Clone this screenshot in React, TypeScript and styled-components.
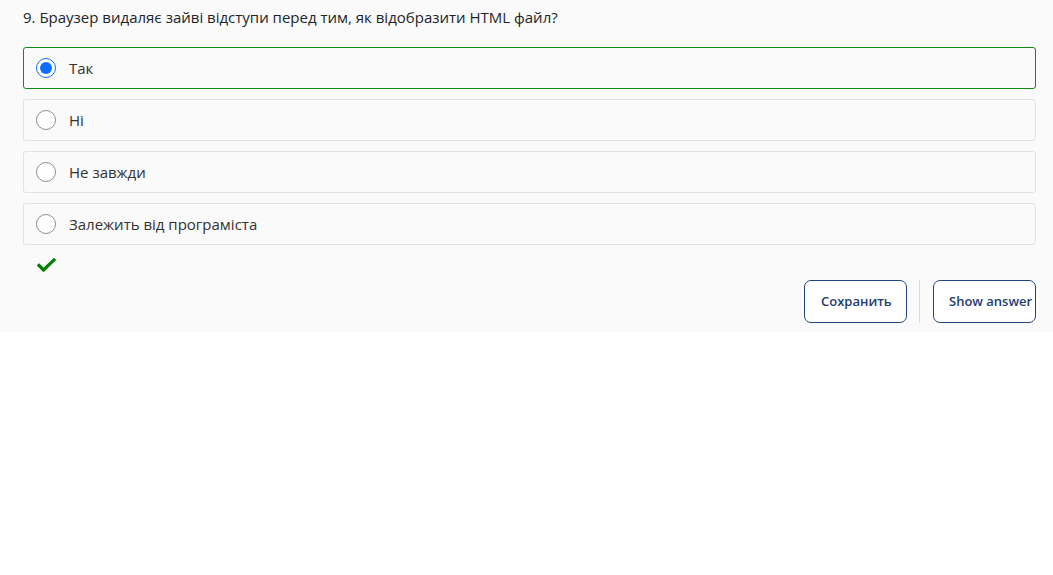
import React, { useState } from "react";
import styled, { createGlobalStyle } from "styled-components";

const Global = createGlobalStyle`
  html, body { margin: 0; padding: 0; background: #ffffff; }
  body { font-family: "Open Sans", "Noto Sans", Arial, sans-serif; }
  * { box-sizing: border-box; }
`;

const Panel = styled.div`
  background: #fafafa;
  padding: 7px 17px 9px 23px;
  display: flex;
  flex-direction: column;
`;

const Question = styled.div`
  font-size: 15px;
  line-height: 20px;
  color: #212529;
  margin-bottom: 20px;
`;

const Options = styled.div`
  display: flex;
  flex-direction: column;
  gap: 10px;
`;

const Option = styled.label<{ $selected: boolean }>`
  display: flex;
  align-items: center;
  gap: 13px;
  height: 42px;
  padding: 0 12px;
  background: #fafafa;
  border: 1px solid ${(p) => (p.$selected ? "#148a14" : "#e3e3e3")};
  border-radius: 3px;
  cursor: pointer;
  font-size: 15px;
  color: #333333;
`;

const Radio = styled.span<{ $checked: boolean }>`
  width: 20px;
  height: 20px;
  border-radius: 50%;
  flex: none;
  background: #ffffff;
  border: 1px solid ${(p) => (p.$checked ? "#0d6efd" : "#8f8f8f")};
  display: flex;
  align-items: center;
  justify-content: center;
  &::after {
    content: "";
    width: 12px;
    height: 12px;
    border-radius: 50%;
    background: ${(p) => (p.$checked ? "#0d6efd" : "transparent")};
  }
`;

const CheckRow = styled.div`
  margin-top: 12px;
  padding-left: 14px;
  height: 16px;
  display: flex;
  align-items: center;
`;

const Actions = styled.div`
  margin-top: 7px;
  display: flex;
  justify-content: flex-end;
  align-items: stretch;
  gap: 12px;
`;

const Divider = styled.div`
  width: 1px;
  background: #dcdcdc;
  margin-right: 1px;
`;

const Button = styled.button<{ $pad: number }>`
  width: 103px;
  height: 43px;
  padding: 0 0 2px ${(p) => p.$pad}px;
  text-align: left;
  white-space: nowrap;
  overflow: visible;
  background: #ffffff;
  border: 1px solid #1f4580;
  border-radius: 7px;
  color: #1e3d6e;
  font-family: "Open Sans", "Noto Sans", Arial, sans-serif;
  font-size: 13px;
  font-weight: 600;
  cursor: pointer;
`;

const options = ["Так", "Ні", "Не завжди", "Залежить від програміста"];

export default function App() {
  const [selected, setSelected] = useState(0);
  return (
    <>
      <Global />
      <Panel>
        <Question>9. Браузер видаляє зайві відступи перед тим, як відобразити HTML файл?</Question>
        <Options>
          {options.map((o, i) => (
            <Option key={o} $selected={selected === i} onClick={() => setSelected(i)}>
              <Radio $checked={selected === i} />
              {o}
            </Option>
          ))}
        </Options>
        <CheckRow>
          <svg width="19" height="14" viewBox="0 0 19 14">
            <polyline points="2,7.5 6.5,12 17,2" fill="none" stroke="#008000" strokeWidth="3.2" strokeLinecap="square" />
          </svg>
        </CheckRow>
        <Actions>
          <Button $pad={16}>Сохранить</Button>
          <Divider />
          <Button $pad={15}>Show answer</Button>
        </Actions>
      </Panel>
    </>
  );
}
